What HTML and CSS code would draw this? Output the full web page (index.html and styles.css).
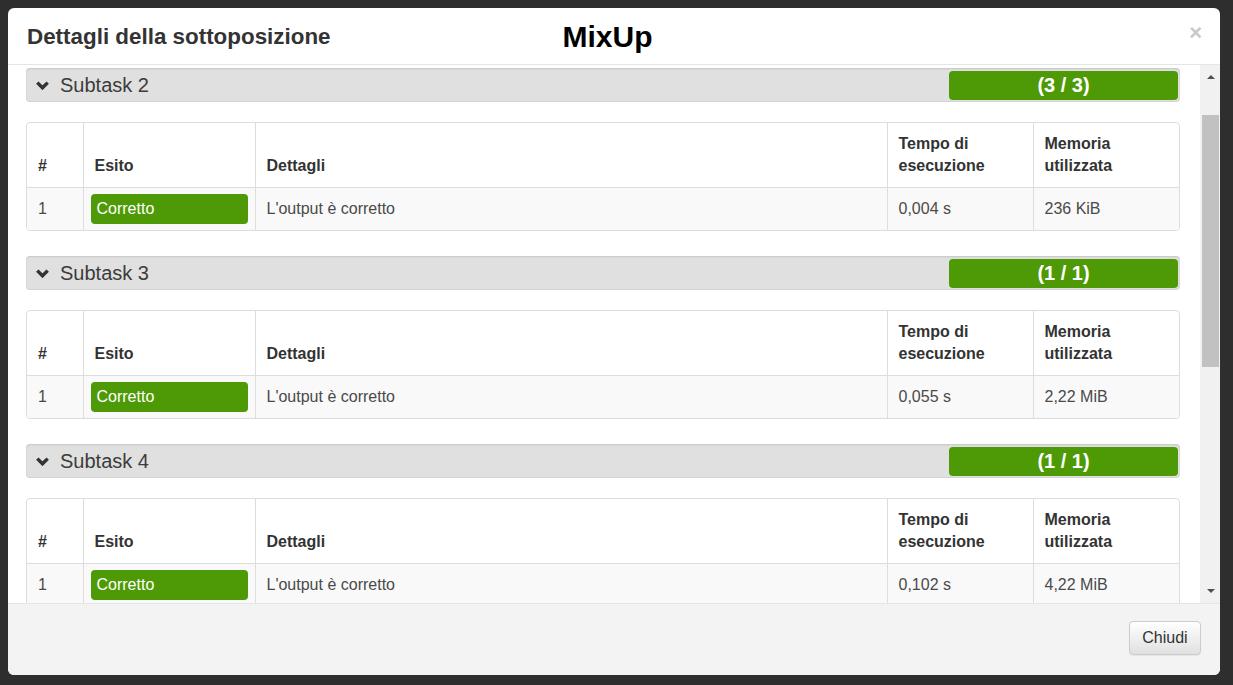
FILE: index.html
```html
<!DOCTYPE html>
<html lang="it">
<head>
<meta charset="utf-8">
<title>Dettagli della sottoposizione</title>
<link rel="stylesheet" href="styles.css">
</head>
<body>
<div class="backdrop">
  <div class="modal">
    <div class="modal-header">
      <h4 class="modal-title">Dettagli della sottoposizione</h4>
      <h1 class="task-name">MixUp</h1>
      <span class="spacer"></span>
      <button class="close" type="button">&times;</button>
    </div>
    <div class="modal-body">
      <div class="scroll-content">
        <section class="subtask">
          <div class="subtask-head">
            <svg class="chev" width="13" height="9" viewBox="0 0 13 9"><path d="M1.3 1.6 L6.5 6.8 L11.7 1.6" fill="none" stroke="#333" stroke-width="3.4"/></svg>
            <span class="subtask-name">Subtask 2</span>
            <span class="score">(3 / 3)</span>
          </div>
          <div class="table-wrap">
            <table class="testcases">
              <colgroup><col class="c-num"><col class="c-out"><col class="c-det"><col class="c-time"><col class="c-mem"></colgroup>
              <thead><tr><th>#</th><th>Esito</th><th>Dettagli</th><th>Tempo di<br>esecuzione</th><th>Memoria<br>utilizzata</th></tr></thead>
              <tbody><tr><td>1</td><td class="outcome"><span class="badge-ok">Corretto</span></td><td>L'output è corretto</td><td>0,004 s</td><td>236 KiB</td></tr></tbody>
            </table>
          </div>
        </section>
        <section class="subtask">
          <div class="subtask-head">
            <svg class="chev" width="13" height="9" viewBox="0 0 13 9"><path d="M1.3 1.6 L6.5 6.8 L11.7 1.6" fill="none" stroke="#333" stroke-width="3.4"/></svg>
            <span class="subtask-name">Subtask 3</span>
            <span class="score">(1 / 1)</span>
          </div>
          <div class="table-wrap">
            <table class="testcases">
              <colgroup><col class="c-num"><col class="c-out"><col class="c-det"><col class="c-time"><col class="c-mem"></colgroup>
              <thead><tr><th>#</th><th>Esito</th><th>Dettagli</th><th>Tempo di<br>esecuzione</th><th>Memoria<br>utilizzata</th></tr></thead>
              <tbody><tr><td>1</td><td class="outcome"><span class="badge-ok">Corretto</span></td><td>L'output è corretto</td><td>0,055 s</td><td>2,22 MiB</td></tr></tbody>
            </table>
          </div>
        </section>
        <section class="subtask">
          <div class="subtask-head">
            <svg class="chev" width="13" height="9" viewBox="0 0 13 9"><path d="M1.3 1.6 L6.5 6.8 L11.7 1.6" fill="none" stroke="#333" stroke-width="3.4"/></svg>
            <span class="subtask-name">Subtask 4</span>
            <span class="score">(1 / 1)</span>
          </div>
          <div class="table-wrap">
            <table class="testcases">
              <colgroup><col class="c-num"><col class="c-out"><col class="c-det"><col class="c-time"><col class="c-mem"></colgroup>
              <thead><tr><th>#</th><th>Esito</th><th>Dettagli</th><th>Tempo di<br>esecuzione</th><th>Memoria<br>utilizzata</th></tr></thead>
              <tbody><tr><td>1</td><td class="outcome"><span class="badge-ok">Corretto</span></td><td>L'output è corretto</td><td>0,102 s</td><td>4,22 MiB</td></tr></tbody>
            </table>
          </div>
        </section>
      </div>
      <div class="scrollbar">
        <div class="sb-btn"><span class="tri-up"></span></div>
        <div class="sb-track"><div class="sb-thumb"></div></div>
        <div class="sb-btn"><span class="tri-down"></span></div>
      </div>
    </div>
    <div class="modal-footer">
      <button class="btn" type="button">Chiudi</button>
    </div>
  </div>
</div>
</body>
</html>
```

FILE: styles.css
```css
* { box-sizing: border-box; }
html, body { margin: 0; padding: 0; }
body {
  background: #2e2e2e;
  font-family: "Liberation Sans", Arial, sans-serif;
  color: #333;
  width: 1233px;
  height: 685px;
  overflow: hidden;
}
.backdrop {
  padding: 8px 13px 10px 8px;
}
.modal {
  width: 1212px;
  height: 667px;
  background: #fff;
  border-radius: 6px;
  overflow: hidden;
  display: flex;
  flex-direction: column;
}
.modal-header {
  height: 57px;
  flex: none;
  border-bottom: 1px solid #e5e5e5;
  display: flex;
  align-items: center;
  padding: 0 18px 0 19px;
}
.modal-title {
  margin: 0;
  font-size: 22.4px;
  font-weight: bold;
  color: #333;
  line-height: 1;
  padding-top: 2px;
}
.task-name {
  margin: 0 0 0 232px;
  font-size: 30px;
  font-weight: bold;
  color: #000;
  line-height: 1;
  padding-top: 2px;
}
.spacer { flex: 1; }
.close {
  background: none;
  border: 0;
  padding: 0;
  font-family: "Liberation Sans", Arial, sans-serif;
  font-size: 22px;
  font-weight: bold;
  color: #c8c8c8;
  line-height: 1;
  margin-top: -6px;
}
.modal-body {
  flex: 1;
  display: flex;
  min-height: 0;
}
.scroll-content {
  flex: 1;
  overflow: hidden;
  padding: 3px 20px 0 18px;
}
.subtask { margin-bottom: 25px; }
.subtask-head {
  height: 34px;
  background: #e0e0e0;
  border-radius: 4px;
  box-shadow: inset 0 1px 2px rgba(0,0,0,0.12), inset 0 -1px 1px rgba(0,0,0,0.05);
  display: flex;
  align-items: center;
  padding: 0 2px 0 10px;
  margin-bottom: 20px;
}
.chev { flex: none; margin-right: 11px; margin-top: 1px; }
.subtask-name {
  font-size: 20px;
  color: #3c3c3c;
  flex: 1;
}
.score {
  width: 229px;
  height: 29px;
  background: #4e9a06;
  border-radius: 4px;
  color: #fff;
  font-weight: bold;
  font-size: 20px;
  display: flex;
  align-items: center;
  justify-content: center;
}
.table-wrap {
  border: 1px solid #ddd;
  border-radius: 4px;
  overflow: hidden;
}
.testcases {
  width: 100%;
  border-collapse: collapse;
  table-layout: fixed;
  font-size: 16px;
}
.c-num { width: 56px; }
.c-out { width: 172px; }
.c-det { width: 632px; }
.c-time { width: 146px; }
.c-mem { width: 146px; }
.testcases th, .testcases td {
  border-left: 1px solid #ddd;
  text-align: left;
  padding: 0 10px 0 11px;
}
.testcases th:first-child, .testcases td:first-child { border-left: 0; }
.testcases th {
  height: 64px;
  vertical-align: bottom;
  padding-bottom: 10px;
  line-height: 22px;
  font-weight: bold;
  color: #333;
}
.testcases td {
  height: 43px;
  border-top: 1px solid #ddd;
  background: #f9f9f9;
  vertical-align: middle;
  color: #4a4a4a;
  padding-top: 1px;
}
.testcases td.outcome { padding: 0 7px; }
.badge-ok {
  display: flex;
  align-items: center;
  height: 30px;
  background: #4e9a06;
  color: #fff;
  border-radius: 4px;
  padding: 0 6px;
}
.scrollbar {
  width: 20px;
  flex: none;
  background: #f1f1f1;
  display: flex;
  flex-direction: column;
}
.sb-btn {
  height: 24px;
  flex: none;
  display: flex;
  align-items: center;
  justify-content: center;
  padding-left: 1px;
}
.tri-up, .tri-down {
  width: 0; height: 0;
  border-left: 4px solid transparent;
  border-right: 4px solid transparent;
}
.tri-up { border-bottom: 4px solid #505050; }
.tri-down { border-top: 4px solid #505050; }
.sb-track {
  flex: 1;
  padding: 26px 1px 0 2px;
}
.sb-thumb {
  height: 252px;
  background: #c1c1c1;
}
.modal-footer {
  height: 72px;
  flex: none;
  border-top: 1px solid #e5e5e5;
  background: #f3f3f3;
  display: flex;
  justify-content: flex-end;
  align-items: flex-start;
  padding: 17px 19px 0 0;
}
.btn {
  font-family: "Liberation Sans", Arial, sans-serif;
  font-size: 16px;
  color: #333;
  height: 34px;
  width: 72px;
  border: 1px solid #ccc;
  border-radius: 4px;
  background: linear-gradient(#fff, #e0e0e0);
  box-shadow: 0 1px 1px rgba(0,0,0,0.06);
}
```
